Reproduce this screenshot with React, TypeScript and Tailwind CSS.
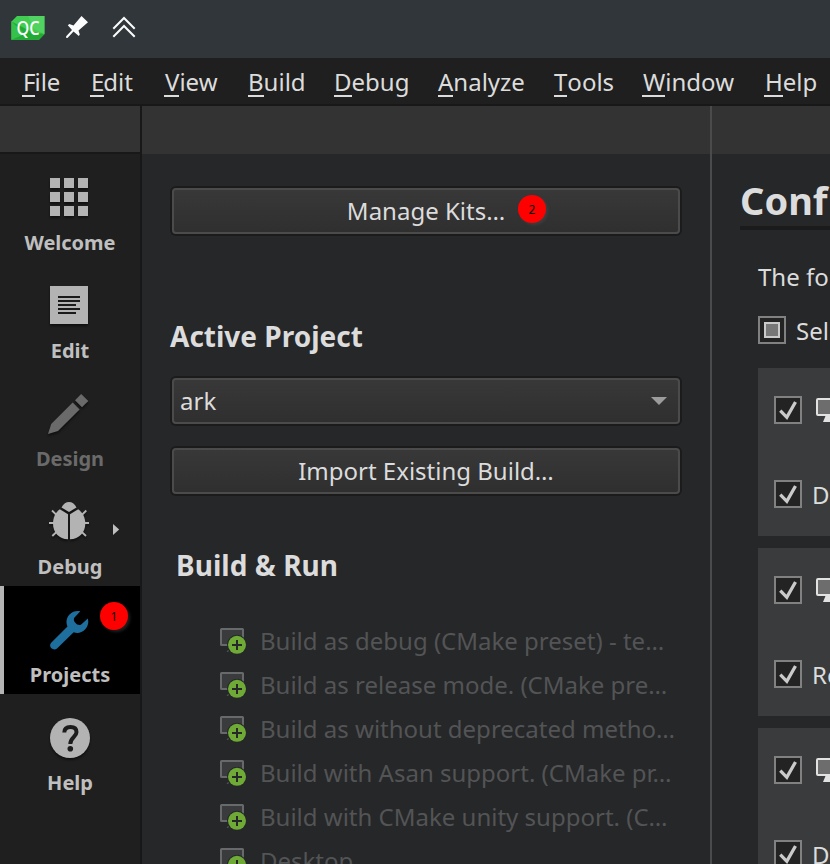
import type { ReactNode } from "react";

const MENU: { label: string; width: string; indent?: string }[] = [
  { label: "File", width: "w-[68px]", indent: "pl-px -mr-px" },
  { label: "Edit", width: "w-[74px]", indent: "pl-px -mr-px" },
  { label: "View", width: "w-[84px]", indent: "pl-px" },
  { label: "Build", width: "w-[86px]" },
  { label: "Debug", width: "w-[104px]" },
  { label: "Analyze", width: "w-[116px]" },
  { label: "Tools", width: "w-[88px]" },
  { label: "Window", width: "w-[122px]", indent: "pl-px" },
  { label: "Help", width: "w-[60px]", indent: "pl-px" },
];

const KITS = [
  "Build as debug (CMake preset) - te…",
  "Build as release mode. (CMake pre…",
  "Build as without deprecated metho…",
  "Build with Asan support. (CMake pr…",
  "Build with CMake unity support. (C…",
  "Desktop",
];

function TitleBar() {
  return (
    <header className="flex h-[58px] shrink-0 items-start bg-[#31363b] pt-3 pl-[10px]">
      <svg className="h-8 w-9" viewBox="10 12 36 32">
        <path d="M17 16H44.5V34L39 39.8H11.5V21.5Z" fill="#41cd52" />
        <path d="M11.5 21.5L32 32L44.5 34L39 39.8H11.5Z" fill="#21ab35" />
        <path d="M11.5 39.8V21.5L25 34Z" fill="#35c14a" />
        <path d="M28 16H44.5V34L34 29Z" fill="#5bd56a" opacity=".65" />
        <text x="28" y="34.5" textAnchor="middle" textLength="23" lengthAdjust="spacingAndGlyphs" fill="#fff" fontFamily="Noto Sans, sans-serif" fontWeight="500" fontSize="19">QC</text>
      </svg>
      <svg className="ml-[18px] h-8 w-8" viewBox="64 12 32 32">
        <path d="M81.5 16L88 22.3L78.5 30.5L79.8 34.5L78.8 36L73.5 31.5L67.5 38L66 37.8L66.2 36.2L72 30L67.8 25.2L69.3 24L73.5 25.5Z" fill="#fcfcfc" />
      </svg>
      <svg className="ml-[14px] h-8 w-8" viewBox="110 12 32 32" fill="none" stroke="#fcfcfc" strokeWidth="2">
        <path d="M113.3 28.7L124 18L134.7 28.7M113.3 36.7L124 26L134.7 36.7" />
      </svg>
    </header>
  );
}

function MenuBar() {
  return (
    <nav className="flex h-12 shrink-0 border-b-2 border-[#181818] bg-[#1f1f1f] pl-[22px] text-[24px] leading-[47px] text-[#dcdcdc]">
      {MENU.map(({ label, width, indent = "" }) => (
        <span key={label} className={`${width} shrink-0 whitespace-nowrap`}>
          <span className={`inline-block h-[39px] border-b-2 border-[#dcdcdc] ${indent}`}>{label[0]}</span>
          {label.slice(1)}
        </span>
      ))}
    </nav>
  );
}

function Badge({ n, place }: { n: number; place: string }) {
  return (
    <span className={`absolute flex size-7 items-center justify-center rounded-full bg-[#ff0000] pt-px text-[12px] text-black shadow-[2px_2px_3px_rgba(80,80,80,0.4)] ${place}`}>
      {n}
    </span>
  );
}

function Mode({ label, children, active, disabled, extra }: { label: string; children: ReactNode; active?: boolean; disabled?: boolean; extra?: ReactNode }) {
  return (
    <div className={`relative flex h-[108px] shrink-0 flex-col items-center ${active ? "bg-black shadow-[inset_4px_0_0_#b4b4b4]" : ""}`}>
      <svg className="mt-5 h-12 w-[60px] drop-shadow-[0_2px_1px_rgba(0,0,0,0.5)]" viewBox="40 20 60 48" fill={disabled ? "#6a6a6a" : "#b3b3b3"}>
        {children}
      </svg>
      <span className={`mt-[7px] text-[20px] leading-7 font-bold ${disabled ? "text-[#6a6a6a]" : "text-[#bfbfbf]"}`}>{label}</span>
      {extra}
    </div>
  );
}

function Sidebar() {
  return (
    <aside className="flex w-[142px] shrink-0 flex-col border-r-2 border-[#181818] bg-[#1f1f1f]">
      <div className="h-12 shrink-0 border-b-2 border-[#181818] bg-[#333333]" />
      <Mode label="Welcome">
        {[24, 38, 52].map((y) => [50, 64, 78].map((x) => <rect key={`${x}-${y}`} x={x} y={y} width="10" height="10" />))}
      </Mode>
      <Mode label="Edit">
        <rect x="50" y="24" width="38" height="38" />
        <path d="M58 35H80M58 39H80M58 43H76M58 47H80M58 51H76" stroke="#1a1a1a" strokeWidth="2" />
      </Mode>
      <Mode label="Design" disabled>
        <path d="M48 64L51.2 54L72.7 32.5L79.6 39.4L58 61Z" />
        <path d="M75 30.2L81.2 24L88.3 31.1L82 37.3Z" />
      </Mode>
      <Mode
        label="Debug"
        extra={
          <svg className="absolute top-[46px] left-[113px] h-3 w-[7px]" viewBox="0 0 7 12">
            <path d="M0 0L6.2 5.5L0 11Z" fill="#bfbfbf" />
          </svg>
        }
      >
        <path d="M61.5 29.5C63.5 25.7 66 24 69 24S74.500 25.700 76.500 29.500L69 34Z" />
        <path d="M59.800 31.300L68 36.300V61.300C59 61 53 54.500 53 45.500C53 39.500 55.500 34.500 59.800 31.300Z" />
        <path d="M78.200 31.300L70 36.300V61.300C79 61 85.300 54.500 85.300 45.500C85.300 39.500 82.500 34.500 78.200 31.300Z" />
        <path d="M49 45H54M85 45H89M52 32.500L56.500 37M86.300 32.500L81.800 37M52.300 58L57 53.500M86 58L81.300 53.500" stroke="#b3b3b3" strokeWidth="1.8" />
      </Mode>
      <Mode label="Projects" active extra={<Badge n={1} place="top-4 left-[100px]" />}>
        <path fill="#1f6f9e" d="M80.300 25.300L74.300 31.800C73.300 33.500 74 35.300 75.300 36.800C77 38.800 79.200 39.800 81.200 38.500L87.800 32.500C89 36.500 88 40.500 85 43.500C82 46.500 78 47.700 73.700 46.300L57 62.500C55.500 63.800 53 63.800 51.400 62.300C49.700 60.700 49.700 58.300 51.200 56.700L67.500 40.500C65.500 36.500 66.500 31.500 69.500 28.500C72.500 25.500 76.500 24.500 80.300 25.300Z" />
      </Mode>
      <Mode label="Help">
        <circle cx="70" cy="44" r="20" />
        <path d="M64.300 38.500C64.300 35 66.500 33 70.500 33S76.500 35 76.500 38.200C76.500 42.500 70.300 43.500 70.300 50" fill="none" stroke="#1c1c1c" strokeWidth="4" />
        <circle cx="70.300" cy="54.700" r="2.800" fill="#1c1c1c" />
      </Mode>
    </aside>
  );
}

function Button({ children, className }: { children: ReactNode; className: string }) {
  return (
    <div className={`relative flex h-[46px] w-[508px] shrink-0 items-center rounded-[4px] border-2 border-[#4b4b4b] bg-linear-to-b from-[#383838] to-[#2f2f2f] text-[24px] shadow-[0_0_0_2px_#1b1b1c] ${className}`}>
      {children}
    </div>
  );
}

function KitIcon() {
  return (
    <svg className="h-[27px] w-[27px] shrink-0" viewBox="0 0 27 27">
      <rect x="1" y="1" width="22" height="16" rx=".5" fill="#3a3b3c" stroke="#68696a" strokeWidth="2" />
      <path d="M6.500 23.500L8.500 22V23.500Z" fill="#77787a" />
      <circle cx="17" cy="16.800" r="10" fill="#262729" />
      <circle cx="17" cy="16.800" r="9" fill="#6faa37" />
      <path d="M12 17H22M17 12V22" stroke="#262729" strokeWidth="2" />
    </svg>
  );
}

function ProjectPanel() {
  return (
    <section className="flex w-[570px] shrink-0 flex-col overflow-hidden border-r-2 border-[#4b4b4b]">
      <div className="h-12 shrink-0 bg-[#333333]" />
      <div className="flex flex-col pl-[30px]">
        <Button className="mt-[34px] justify-center">
          Manage Kits…
          <Badge n={2} place="top-[5px] left-[344px]" />
        </Button>
        <h2 className="mt-[82px] -ml-[2px] h-10 text-[28px] leading-10 font-bold">Active Project</h2>
        <Button className="mt-[22px] justify-between pr-[11px] pl-[6px]">
          ark
          <svg className="h-2 w-4" viewBox="0 0 16 8">
            <path d="M0 0H16L8 8Z" fill="#9c9c9c" />
          </svg>
        </Button>
        <Button className="mt-6 justify-center">Import Existing Build…</Button>
        <h2 className="mt-[51px] ml-[4px] h-10 text-[28px] leading-10 font-bold tracking-[0.05px]">Build &amp; Run</h2>
        <ul className="mt-[34px] ml-12">
          {KITS.map((kit) => (
            <li key={kit} className="flex h-11 items-center gap-[13px] text-[24px] whitespace-nowrap text-[#535455]">
              <KitIcon />
              {kit}
            </li>
          ))}
        </ul>
      </div>
    </section>
  );
}

function Check() {
  return (
    <span className="flex size-7 shrink-0 border-2 border-[#808180] bg-[#232323]">
      <svg className="size-6" viewBox="0 0 24 24">
        <path d="M4.300 12.700L10.800 19.300L19.500 4" fill="none" stroke="#cacaca" strokeWidth="3.300" />
      </svg>
    </span>
  );
}

function KitCard({ text }: { text: string }) {
  return (
    <div className="flex h-[168px] w-[72px] shrink-0 flex-col gap-14 overflow-hidden bg-[#3a3b3c] pt-7 pl-4">
      <div className="flex gap-[14px]">
        <Check />
        <svg className="h-[26px] w-8 shrink-0 pt-[2px]" viewBox="0 0 32 24">
          <rect x="1" y="1" width="28" height="16" rx="1" fill="#6c6d6c" stroke="#e2e2e2" strokeWidth="2" />
          <path d="M9.500 18H21L24 24H7Z" fill="#e2e2e2" />
        </svg>
      </div>
      <div className="flex h-7 items-center gap-[10px] text-[24px] leading-7">
        <Check />
        <span className="pt-[2px]">{text}</span>
      </div>
    </div>
  );
}

function ConfigurePanel() {
  return (
    <section className="flex min-w-0 flex-1 flex-col overflow-hidden">
      <div className="h-12 shrink-0 bg-[#333333]" />
      <h1 className="mt-4 ml-7 h-[60px] shrink-0 border-b-4 border-[#1b1b1c] text-[38px] leading-[60px] font-bold whitespace-nowrap">Conf</h1>
      <p className="mt-[31px] ml-[46px] h-8 text-[24px] leading-8 whitespace-nowrap">The fo</p>
      <div className="mt-[23px] ml-[46px] flex h-7 items-center gap-[10px] text-[24px]">
        <span className="flex size-7 shrink-0 items-center justify-center border-2 border-[#808180] bg-[#232323]">
          <span className="size-4 border-2 border-[#cacaca] bg-[#777777]" />
        </span>
        <span className="pt-[2px]">Sel</span>
      </div>
      <div className="mt-6 ml-[46px] flex flex-col gap-3">
        <KitCard text="D" />
        <KitCard text="Re" />
        <KitCard text="D" />
      </div>
    </section>
  );
}

export default function App() {
  return (
    <div className="flex h-[864px] w-[830px] flex-col overflow-hidden bg-[#262729] font-['Noto_Sans',sans-serif] text-[#dcdcdc]">
      <TitleBar />
      <MenuBar />
      <main className="flex min-h-0 flex-1">
        <Sidebar />
        <ProjectPanel />
        <ConfigurePanel />
      </main>
    </div>
  );
}
